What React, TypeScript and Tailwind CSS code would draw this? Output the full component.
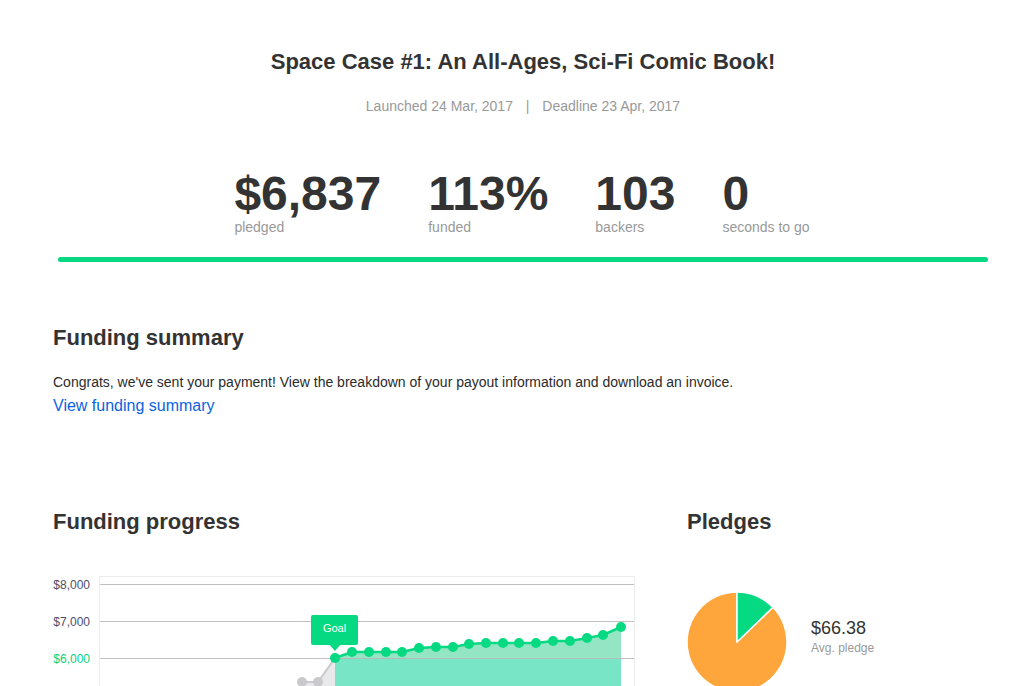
import React from 'react';

const stats = [
    { value: '$6,837', label: 'pledged' },
    { value: '113%', label: 'funded' },
    { value: '103', label: 'backers' },
    { value: '0', label: 'seconds to go' },
];

// chart points in page coordinates (svg uses a matching viewBox)
const grayPoints = [
    [302, 682],
    [318, 682],
    [335, 658],
];

const greenPoints = [
    [335, 658], [352, 652], [369, 652], [386, 652], [402, 652], [419, 648],
    [436, 647], [453, 647], [469, 644], [486, 643], [503, 643], [519, 643],
    [536, 643], [553, 641], [570, 641], [587, 638], [603, 635], [621, 627],
];

const toLine = (pts: number[][]) => pts.map(p => p.join(',')).join(' ');

const FundingChart = () => {
    const greenArea = `335,700 ${toLine(greenPoints)} 621,700`;
    const grayArea = `302,700 ${toLine(grayPoints)} 335,700`;

    return (
        <svg width="584" height="116" viewBox="52 570 584 116" className="block">
            <rect x="99.5" y="576.5" width="535" height="200" fill="none" stroke="#ececec" />

            <polygon points={grayArea} fill="#e9e9ec" />
            <polygon points={greenArea} fill="#93e5c4" />
            <rect x="335" y="658" width="286" height="60" fill="#78e5c7" />

            {[584.5, 621.5, 658.5].map(y => (
                <line key={y} x1="100" x2="634" y1={y} y2={y} stroke="#b9b9b9" strokeOpacity="0.9" />
            ))}

            <text x="90" y="588.5" textAnchor="end" fontSize="12" fill="#4b4e6b" fontFamily="'Liberation Sans', Arial, sans-serif">$8,000</text>
            <text x="90" y="625.5" textAnchor="end" fontSize="12" fill="#4b4e6b" fontFamily="'Liberation Sans', Arial, sans-serif">$7,000</text>
            <text x="90" y="662.5" textAnchor="end" fontSize="12" fill="#05d47f" fontFamily="'Liberation Sans', Arial, sans-serif">$6,000</text>

            <polyline points={toLine(grayPoints)} fill="none" stroke="#c9c9ce" strokeWidth="2" />
            {grayPoints.slice(0, 2).map(([x, y]) => (
                <circle key={x} cx={x} cy={y} r="5" fill="#c9c9ce" />
            ))}

            <polyline points={toLine(greenPoints)} fill="none" stroke="#05d981" strokeWidth="2.5" />
            {greenPoints.map(([x, y]) => (
                <circle key={x} cx={x} cy={y} r="5" fill="#05d981" />
            ))}

            {/* goal tooltip */}
            <rect x="311" y="615" width="47" height="30" rx="2" fill="#05d981" />
            <polygon points="329,644 341,644 335,651" fill="#05d981" />
            <text x="334.5" y="632" textAnchor="middle" fontSize="11" fill="#ffffff" fontFamily="'Liberation Sans', Arial, sans-serif">Goal</text>
        </svg>
    );
};

const PledgePie = () => (
    <svg width="100" height="100" viewBox="687 592 100 100" className="block shrink-0">
        <path d="M737,642 L772.97,607.27 A50,50 0 1,1 737,592 Z" fill="#fea63b" stroke="#ffffff" strokeWidth="1.5" strokeLinejoin="round" />
        <path d="M737,642 L737,592 A50,50 0 0,1 772.97,607.27 Z" fill="#05d981" stroke="#ffffff" strokeWidth="1.5" strokeLinejoin="round" />
    </svg>
);

const App = () => {
    return (
        <div className="h-[686px] overflow-hidden bg-white text-[#333] font-['Liberation_Sans',Arial,sans-serif]">
            <div className="ml-[58px] w-[930px] pt-[48px]">
                <h1 className="text-center text-[22px] leading-7 font-bold text-[#333]">
                    Space Case #1: An All-Ages, Sci-Fi Comic Book!
                </h1>
                <p className="mt-[20px] text-center text-[14px] leading-5 text-[#999]">
                    Launched 24 Mar, 2017 <span className="mx-[9px]">|</span> Deadline 23 Apr, 2017
                </p>

                <div className="mt-[54px] flex justify-center gap-[47px] pr-[2px]">
                    {stats.map(s => (
                        <div key={s.label}>
                            <p className="text-[48px] leading-[48px] font-bold text-[#333]">{s.value}</p>
                            <p className="mt-px text-[14px] leading-4 text-[#999]">{s.label}</p>
                        </div>
                    ))}
                </div>

                <div className="mt-[22px] h-[5px] rounded-full bg-[#09d882]"></div>
            </div>

            <div className="pl-[53px]">
                <div className="mt-[62px]">
                    <h2 className="text-[22px] leading-7 font-bold text-[#333]">Funding summary</h2>
                    <p className="mt-[20px] text-[14px] leading-5 text-[#2b2b2b]">
                        Congrats, we've sent your payment! View the breakdown of your payout information and download an invoice.
                    </p>
                    <a className="mt-[2px] block text-[16px] leading-6 text-[#0b63e3]">View funding summary</a>
                </div>

                <div className="mt-[90px] flex">
                    <div className="w-[585px]">
                        <h2 className="text-[22px] leading-7 font-bold text-[#333]">Funding progress</h2>
                        <div className="mt-[34px] -ml-px">
                            <FundingChart />
                        </div>
                    </div>
                    <div className="ml-[49px]">
                        <h2 className="text-[22px] leading-7 font-bold text-[#333]">Pledges</h2>
                        <div className="mt-[56px] flex items-start">
                            <PledgePie />
                            <div className="ml-[24px] mt-[24px]">
                                <p className="text-[18px] leading-6 text-[#333]">$66.38</p>
                                <p className="text-[12px] leading-4 text-[#999]">Avg. pledge</p>
                            </div>
                        </div>
                    </div>
                </div>
            </div>
        </div>
    );
};

export default App;
